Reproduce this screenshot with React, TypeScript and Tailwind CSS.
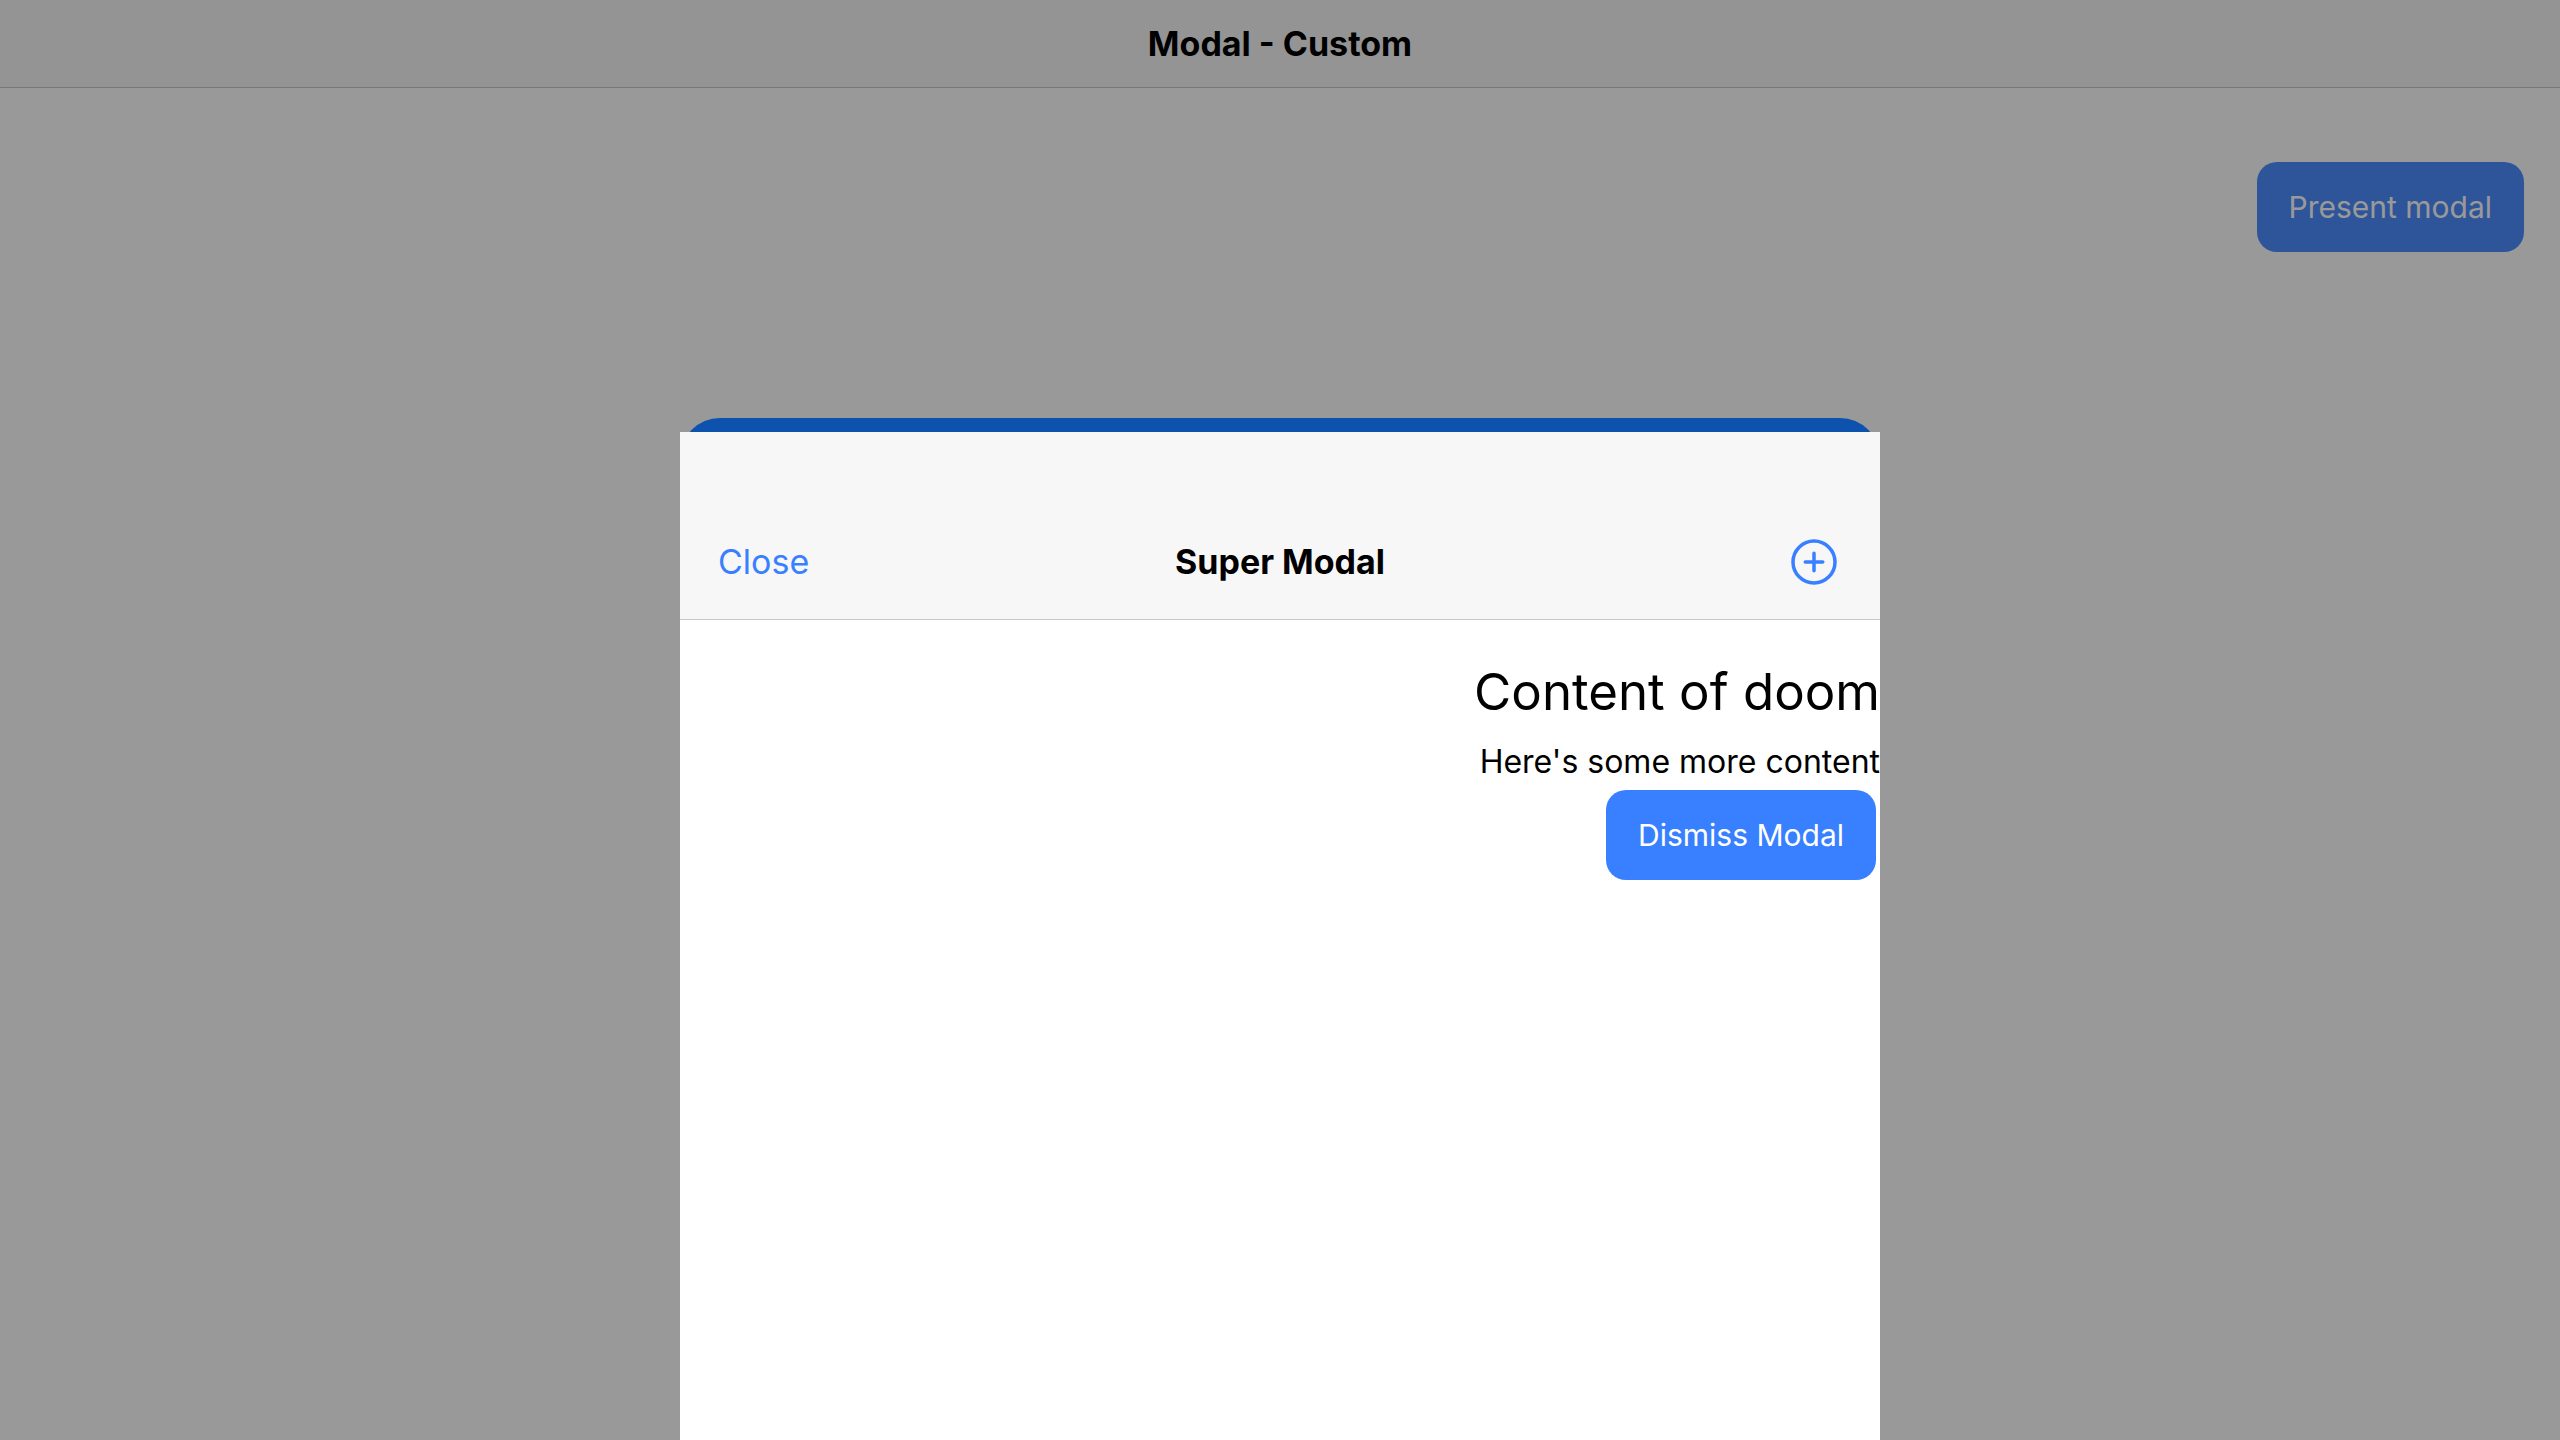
function AddCircleIcon() {
  return (
    <svg viewBox="0 0 512 512" className="size-14" fill="none" stroke="currentColor" strokeWidth="32" aria-hidden="true">
      <path d="M448 256c0-106-86-192-192-192S64 150 64 256s86 192 192 192 192-86 192-192z" strokeMiterlimit="10" />
      <path d="M256 176v160M336 256H176" strokeLinecap="round" strokeLinejoin="round" />
    </svg>
  );
}

function Page() {
  return (
    <div className="min-h-screen bg-white">
      <header className="flex h-[88px] items-center justify-center border-b border-[#c8c8c8] bg-[#f7f7f7]">
        <h1 className="text-[34px] leading-10 font-bold">Modal - Custom</h1>
      </header>
      <main className="flex justify-end px-9 pt-[74px]">
        <button type="button" className="h-[90px] rounded-[20px] bg-[#4d8dff] px-8 text-[30px] leading-10 text-white">
          Present modal
        </button>
      </main>
    </div>
  );
}

function SuperModal() {
  return (
    <div
      role="dialog"
      aria-modal="true"
      aria-labelledby="modal-title"
      className="flex w-full max-w-[1200px] flex-1 flex-col rounded-t-[40px] bg-[#0d52ad] pt-3.5"
    >
      <header className="grid grid-cols-[1fr_auto_1fr] items-center border-b border-[#c8c8c8] bg-[#f7f7f7] px-[38px] pt-[94px] pb-[21px]">
        <button type="button" className="h-[72px] justify-self-start text-[34px] leading-10 text-[#3880ff]">
          Close
        </button>
        <h2 id="modal-title" className="text-[34px] leading-10 font-bold">
          Super Modal
        </h2>
        <button type="button" aria-label="Add" className="justify-self-end text-[#3880ff]">
          <AddCircleIcon />
        </button>
      </header>
      <div className="flex flex-1 flex-col items-end bg-white pt-10">
        <h3 className="text-[51px] leading-16">Content of doom</h3>
        <p className="pt-4 text-[32px] leading-11">Here's some more content</p>
        <button type="button" className="mt-1.5 mr-1 h-[90px] rounded-[20px] bg-[#3880ff] px-8 text-[30px] leading-10 text-white">
          Dismiss Modal
        </button>
      </div>
    </div>
  );
}

export default function App() {
  return (
    <div className="font-['Inter',sans-serif] text-black">
      <Page />
      <div className="fixed inset-0 flex flex-col items-center bg-black/40 pt-[418px]">
        <SuperModal />
      </div>
    </div>
  );
}
